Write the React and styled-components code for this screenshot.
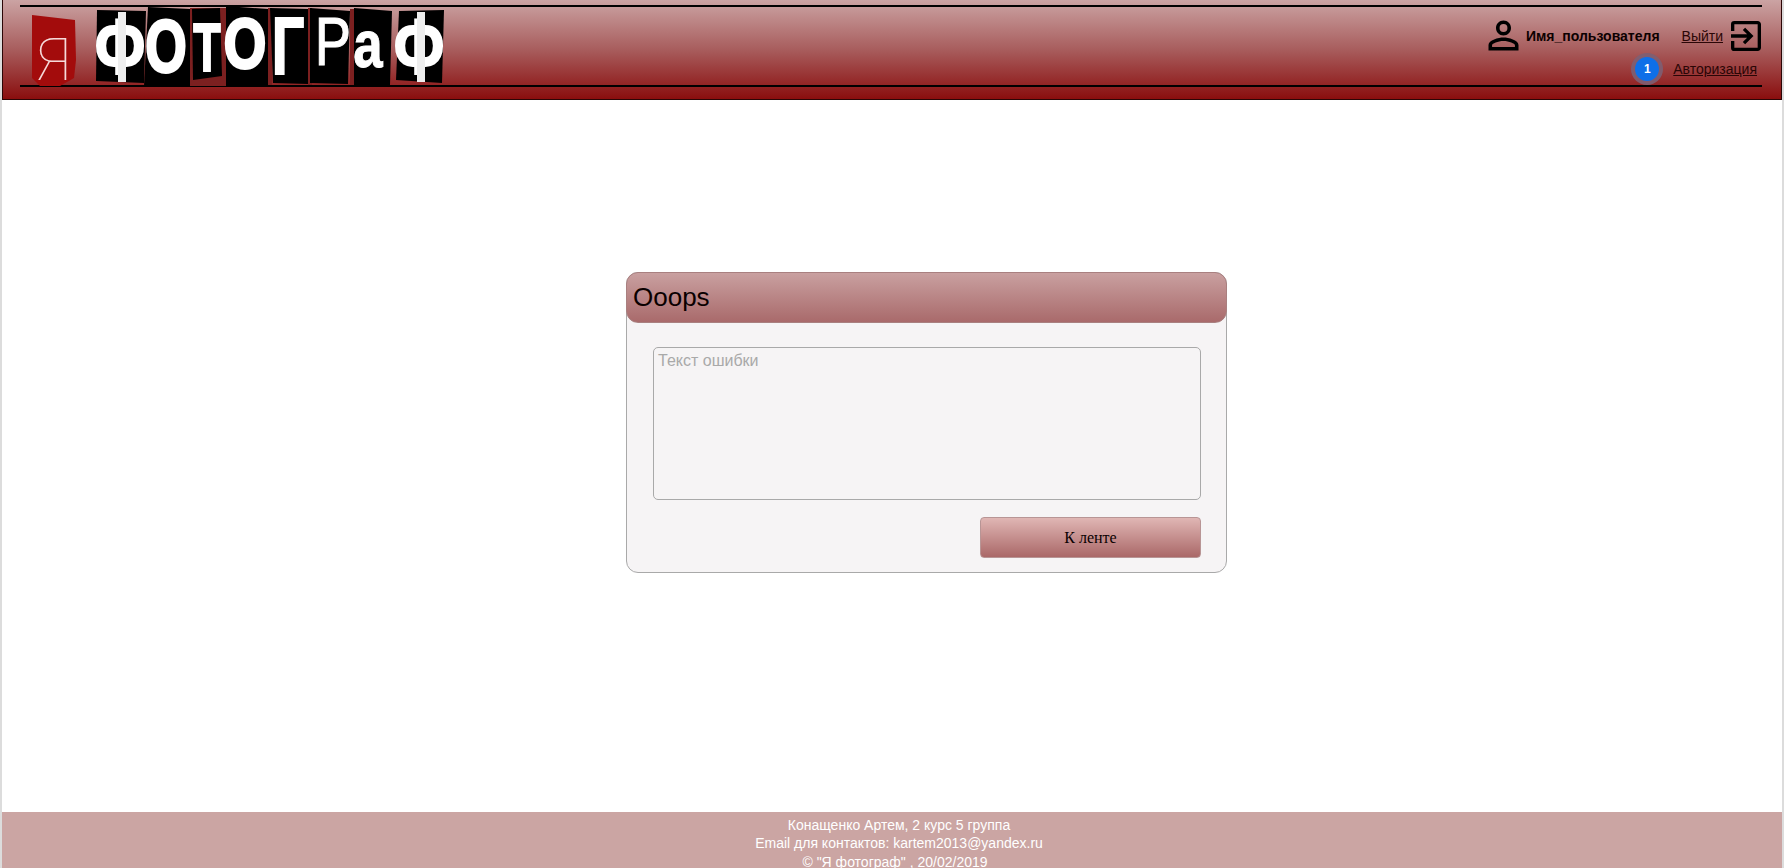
import React from "react";
import styled, { createGlobalStyle } from "styled-components";
import { MdPersonOutline, MdExitToApp } from "react-icons/md";

const GlobalStyle = createGlobalStyle`
  html, body {
    margin: 0;
    padding: 0;
    background: #fff;
    font-family: "Liberation Sans", Arial, sans-serif;
  }
`;

const Page = styled.div`
  display: flex;
  flex-direction: column;
  box-sizing: border-box;
  height: 868px;
  overflow: hidden;
  border-left: 2px solid #dcdcdc;
  border-right: 2px solid #dcdcdc;
`;

const Header = styled.header`
  box-sizing: border-box;
  height: 100px;
  flex: none;
  padding: 5px 19px 0 17px;
  background: linear-gradient(#cba3a3 0%, #a85d5d 50%, #8a0e0e 100%);
  border: 1px solid #2c0606;
  border-top: 0;
`;

const HeaderInner = styled.div`
  display: flex;
  justify-content: space-between;
  box-sizing: border-box;
  height: 82px;
  border-top: 2px solid #000;
  border-bottom: 2px solid #000;
`;

const Logo = styled.svg`
  display: block;
  align-self: flex-start;
  width: 430px;
  height: 80px;
  flex: none;
  overflow: visible;
`;

const LetterText = styled.text`
  font-family: "Liberation Sans", Arial, sans-serif;
  font-weight: ${(p) => (p.$thin ? 400 : 700)};
  fill: #fff;
  stroke: #fff;
  stroke-width: ${(p) => p.$bold}px;
`;

const HairText = styled.text`
  font-family: Roboto, "Liberation Sans", sans-serif;
  font-weight: 100;
  fill: #f6dada;
`;

const UserBlock = styled.div`
  display: flex;
  flex-direction: column;
  align-items: flex-end;
  padding-top: 12px;
`;

const UserRow = styled.div`
  display: flex;
  align-items: center;
  height: 34px;
`;

const AuthRow = styled.div`
  display: flex;
  align-items: center;
  height: 30px;
  margin-top: 1px;
  padding-right: 5px;
`;

const PersonIcon = styled(MdPersonOutline)`
  display: block;
  font-size: 45px;
  margin: 0 0 2px 0;
  color: #000;
`;

const ExitIcon = styled(MdExitToApp)`
  display: block;
  font-size: 40px;
  margin: 0 -4px 0 3px;
  color: #000;
`;

const UserName = styled.span`
  font-size: 14px;
  font-weight: 700;
  color: #0c0000;
  margin-right: 22px;
`;

const HeaderLink = styled.a`
  font-size: 14px;
  color: #2a0606;
  text-decoration: underline;
`;

const Badge = styled.span`
  display: flex;
  align-items: center;
  justify-content: center;
  width: 24px;
  height: 24px;
  margin-right: 14px;
  border-radius: 50%;
  background: #0e6fe8;
  box-shadow: 0 0 0 4px rgba(125, 95, 115, 0.9);
  color: #fff;
  font-size: 12px;
  font-weight: 700;
`;

const Main = styled.main`
  flex: 1;
  padding: 172px 0 0 624px;
`;

const Card = styled.section`
  box-sizing: border-box;
  width: 601px;
  height: 301px;
  background: #f6f4f5;
  border: 1px solid #a9a9a9;
  border-radius: 12px;
`;

const CardHead = styled.div`
  box-sizing: border-box;
  height: 51px;
  margin: -1px -1px 0;
  padding-left: 6px;
  background: linear-gradient(#c9a0a0, #a96a6b);
  border: 1px solid #a98080;
  border-radius: 12px;
  font-size: 26px;
  line-height: 49px;
  color: #0a0000;
`;

const CardBody = styled.div`
  display: flex;
  flex-direction: column;
  align-items: flex-end;
  padding: 24px 25px 0;
`;

const ErrorText = styled.textarea`
  display: block;
  box-sizing: border-box;
  width: 548px;
  height: 153px;
  padding: 4px;
  background: #f6f4f5;
  border: 1px solid #a9a9a9;
  border-radius: 5px;
  resize: none;
  font-family: "Liberation Sans", Arial, sans-serif;
  font-size: 16px;

  &::placeholder {
    color: #a9a9a9;
    opacity: 1;
  }
`;

const FeedButton = styled.button`
  width: 221px;
  height: 41px;
  margin-top: 17px;
  background: linear-gradient(#e0b6b4, #aa6868);
  border: 1px solid #b89595;
  border-radius: 4px;
  font-family: "Liberation Serif", "Times New Roman", serif;
  font-size: 16px;
  color: #0a0000;
`;

const Footer = styled.footer`
  box-sizing: border-box;
  height: 56px;
  flex: none;
  padding: 4px 0 0 14px;
  background: #cba5a3;
  color: #fff;
  font-size: 14px;
  line-height: 18.4px;
  text-align: center;
`;

const FooterLine = styled.div`
  margin-right: ${(p) => p.$shift || 0}px;
`;

const patches = [
  "97,10 146,11 144,83 96,81",
  "148,7 190,9 190,85 144,86",
  "192,9 220,8 222,76 193,80",
  "226,6 268,9 268,86 226,85",
  "270,8 308,9 308,84 273,83",
  "310,8 350,11 348,84 310,83",
  "354,8 392,11 390,85 354,85",
  "399,11 444,10 442,83 396,80",
];

// x = centre, y = baseline, sx stretches the glyph to the cut-out letter
const letters = [
  { ch: "Ф", x: 120, y: 74, size: 78, sx: 0.76, bold: 2 },
  { ch: "О", x: 166, y: 72, size: 74, sx: 0.72, bold: 3 },
  { ch: "Т", x: 207, y: 71, size: 68, sx: 0.66, bold: 2 },
  { ch: "О", x: 245, y: 68, size: 70, sx: 0.78, bold: 3 },
  { ch: "Г", x: 288, y: 74, size: 82, sx: 0.7, bold: 2 },
  { ch: "Р", x: 333, y: 65, size: 68, sx: 0.8, bold: 1, thin: true },
  { ch: "а", x: 368, y: 67, size: 66, sx: 0.8, bold: 1 },
  { ch: "Ф", x: 419, y: 74, size: 78, sx: 0.76, bold: 2 },
];

const LogoMark = () => (
  <Logo viewBox="20 7 430 80" aria-label="Я фотограф">
    <path d="M32 15 L75 20 L76 60 L74 78 L60 86 L40 86 L32 78 Z" fill="#a30c0c" />
    <HairText x="53" y="80" fontSize="60" textAnchor="middle">
      Я
    </HairText>
    <polygon points="190,8 226,8 226,86 190,86" fill="#7c2020" />
    <polygon points="268,8 272,8 272,85 268,85" fill="#7c2020" />
    <polygon points="308,8 312,8 312,85 308,85" fill="#7c2020" />
    <polygon points="350,9 355,9 355,85 350,85" fill="#7c2020" />
    {patches.map((points) => (
      <polygon key={points} points={points} fill="#000" />
    ))}
    {letters.map(({ ch, x, y, size, sx, bold, thin }) => (
      <LetterText
        key={x}
        $thin={thin}
        $bold={bold}
        fontSize={size}
        textAnchor="middle"
        transform={`translate(${x} ${y}) scale(${sx} 1)`}
      >
        {ch}
      </LetterText>
    ))}
    {/* the stems of both Ф stick out past the oval */}
    <rect x="118" y="12" width="8" height="70" fill="#eee" />
    <rect x="417" y="12" width="8" height="70" fill="#eee" />
  </Logo>
);

export default function App() {
  return (
    <>
      <GlobalStyle />
      <Page>
        <Header>
          <HeaderInner>
            <LogoMark />
            <UserBlock>
              <UserRow>
                <PersonIcon />
                <UserName>Имя_пользователя</UserName>
                <HeaderLink href="#">Выйти</HeaderLink>
                <ExitIcon />
              </UserRow>
              <AuthRow>
                <Badge>1</Badge>
                <HeaderLink href="#">Авторизация</HeaderLink>
              </AuthRow>
            </UserBlock>
          </HeaderInner>
        </Header>
        <Main>
          <Card>
            <CardHead>Ooops</CardHead>
            <CardBody>
              <ErrorText placeholder="Текст ошибки" />
              <FeedButton>К ленте</FeedButton>
            </CardBody>
          </Card>
        </Main>
        <Footer>
          <FooterLine>Конащенко Артем, 2 курс 5 группа</FooterLine>
          <FooterLine>Email для контактов: kartem2013@yandex.ru</FooterLine>
          <FooterLine $shift={8}>© "Я фотограф" , 20/02/2019</FooterLine>
        </Footer>
      </Page>
    </>
  );
}
